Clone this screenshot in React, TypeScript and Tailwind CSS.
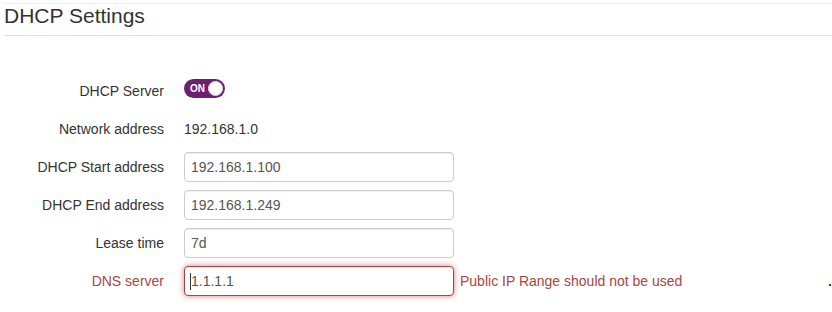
const font = { fontFamily: '"Liberation Sans", Arial, sans-serif' };

function Row({ label, danger, children }: { label: string; danger?: boolean; children: React.ReactNode }) {
  return (
    <div className="flex items-center h-[30px]">
      <div className={`w-[164px] text-right text-[14px] ${danger ? "text-[#a94442]" : "text-[#333]"}`}>{label}</div>
      <div className="ml-[20px] flex items-center flex-1">{children}</div>
    </div>
  );
}

function Field({ value, danger }: { value: string; danger?: boolean }) {
  return (
    <div
      className={`w-[270px] h-[30px] rounded-[4px] border pl-[6px] flex items-center text-[14px] text-[#555] bg-white ${
        danger
          ? "border-[#a94442] shadow-[inset_0_1px_1px_rgba(0,0,0,0.075),0_0_6px_#ce8483]"
          : "border-[#ccc] shadow-[inset_0_1px_1px_rgba(0,0,0,0.075)]"
      }`}
    >
      {danger && <span className="inline-block w-px h-[17px] bg-[#333] -ml-px mr-0" />}
      {value}
    </div>
  );
}

export default function App() {
  return (
    <div className="w-[832px] h-[312px] bg-white overflow-hidden" style={font}>
      <div className="pl-[4px] pt-[3px]">
        <div className="border-t border-[#eee]" />
        <div className="border-b border-[#e5e5e5] pb-[8px]">
          <h2 className="text-[21px] leading-[23px] text-[#333]">DHCP Settings</h2>
        </div>
      </div>
      <div className="mt-[40px] flex flex-col gap-[8px]">
        <Row label="DHCP Server">
          <div className="mb-[5px] w-[41px] h-[19px] rounded-full bg-[#6e206e] flex items-center justify-between pl-[6px] pr-[2px]">
            <span className="text-[10px] font-bold text-white leading-none">ON</span>
            <span className="w-[15px] h-[15px] rounded-full bg-white border border-[#ddd]" />
          </div>
        </Row>
        <Row label="Network address">
          <span className="text-[14px] text-[#333]">192.168.1.0</span>
        </Row>
        <Row label="DHCP Start address">
          <Field value="192.168.1.100" />
        </Row>
        <Row label="DHCP End address">
          <Field value="192.168.1.249" />
        </Row>
        <Row label="Lease time">
          <Field value="7d" />
        </Row>
        <Row label="DNS server" danger>
          <Field value="1.1.1.1" danger />
          <span className="ml-[6px] text-[14px] text-[#a94442]">Public IP Range should not be used</span>
          <span className="ml-auto mr-[1px] mt-[8px] w-[2px] h-[2px] bg-[#2020ff]" />
        </Row>
      </div>
    </div>
  );
}
